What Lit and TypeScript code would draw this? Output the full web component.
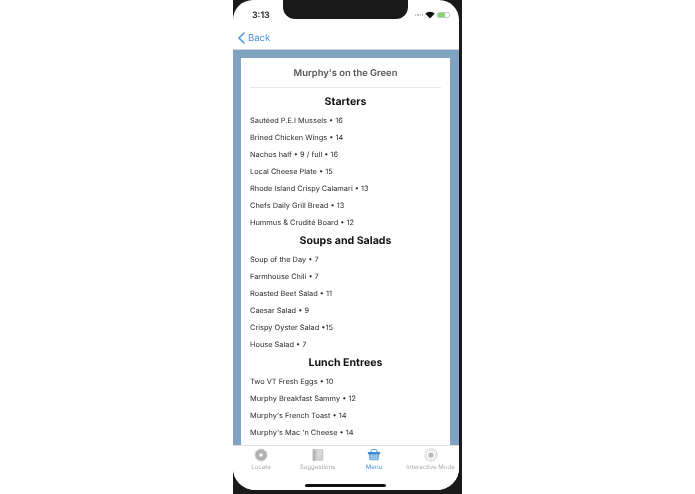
import { LitElement, html, css } from "lit";
import { customElement } from "lit/decorators.js";

const sections: { title: string; items: string[] }[] = [
  { title: "Starters", items: ["Sautéed P.E.I Mussels • 16", "Brined Chicken Wings • 14", "Nachos half • 9 / full • 16", "Local Cheese Plate • 15", "Rhode Island Crispy Calamari • 13", "Chefs Daily Grill Bread • 13", "Hummus & Crudité Board • 12"] },
  { title: "Soups and Salads", items: ["Soup of the Day • 7", "Farmhouse Chili • 7", "Roasted Beet Salad • 11", "Caesar Salad • 9", "Crispy Oyster Salad •15", "House Salad • 7"] },
  { title: "Lunch Entrees", items: ["Two VT Fresh Eggs • 10", "Murphy Breakfast Sammy • 12", "Murphy's French Toast • 14", "Murphy's Mac 'n Cheese • 14"] },
];

const locate = html`<svg viewBox="0 0 16 16" class="ic"><circle cx="8" cy="8" r="4.3" fill="none" stroke="#b0b0b0" stroke-width="4.6"/><circle cx="8" cy="8" r="6.9" fill="none" stroke="#bcbcbc" stroke-width="1.1" stroke-dasharray="1.8 1"/></svg>`;
const suggestions = html`<svg viewBox="0 0 16 16" class="ic"><rect x="2" y="1.5" width="12" height="13" fill="#c8c8c8"/><rect x="2" y="1.5" width="3" height="13" fill="#b4b4b4"/><path d="M6.5 4h6M6.5 6.5h6M6.5 9h6M6.5 11.5h6" stroke="#eeeeee" stroke-width="1"/></svg>`;
const basket = html`<svg viewBox="0 0 16 16" class="ic"><path d="M4 5 5.5 1.8h5L12 5" fill="none" stroke="#3f8bd2" stroke-width="1"/><rect x="1" y="4.6" width="14" height="2.2" rx=".6" fill="#3f8bd2"/><path d="M2 6.8h12l-1 7.2H3z" fill="#5a9cda"/><path d="M5.5 7v7M8 7v7M10.5 7v7M2.5 9.2h11M2.8 11.7h10.4" stroke="#dcebf8" stroke-width=".7"/></svg>`;
const interactive = html`<svg viewBox="0 0 16 16" class="ic"><circle cx="8" cy="8" r="3" fill="#b8b8b8"/><circle cx="8" cy="8" r="5.2" fill="none" stroke="#d8d8d8" stroke-width="1"/><circle cx="8" cy="8" r="7" fill="none" stroke="#cacaca" stroke-width="1.4" stroke-dasharray="1.8 1.2"/></svg>`;

@customElement("app-root")
export class AppRoot extends LitElement {
  static styles = css`
    :host { display: flex; justify-content: flex-start; width: 695px; height: 494px; background: #fff; overflow: hidden; font-family: Inter, "Liberation Sans", sans-serif; text-rendering: geometricPrecision; }
    .device { margin-left: 233px; width: 229px; height: 494px; background: #1a1a1a; position: relative; flex: none; filter: blur(0.35px); }
    .screen { width: 226px; height: 490px; background: #fff; border-radius: 20px 20px 22px 22px; overflow: hidden; display: flex; flex-direction: column; }
    .notch { position: absolute; left: 50px; top: 0; width: 125px; height: 19px; background: #1a1a1a; border-radius: 0 0 12px 12px; }
    .status { height: 28px; flex: none; display: flex; justify-content: space-between; align-items: center; padding: 2px 9px 0 19px; box-sizing: border-box; }
    .time { font-size: 8.8px; font-weight: 600; color: #222; }
    .sys { display: flex; align-items: center; gap: 2px; }
    .dots { display: flex; gap: 1px; }
    .dots i { width: 1.2px; height: 1.2px; border-radius: 50%; background: #bbb; display: block; }
    .wifi { width: 10px; height: 8px; display: block; }
    .batt { width: 13px; height: 6px; border: 1px solid #c8c8c8; border-radius: 2px; box-sizing: border-box; background: linear-gradient(90deg, #86d276 0 60%, #fff 60%); display: block; }
    .nav { height: 22px; flex: none; display: flex; align-items: center; gap: 3px; padding: 0 0 1px 5px; box-sizing: border-box; color: #4a90e2; font-size: 9.5px; border-bottom: 1px solid #cfd6dc; }
    .chev { width: 7px; height: 12px; display: block; }
    .content { flex: 1; min-height: 0; overflow: hidden; background: #7fa3c0; padding: 8px 9px 0 8px; }
    .card { background: #fff; padding: 1px 9px 0; height: 420px; overflow: hidden; }
    .title { height: 28px; display: flex; align-items: center; justify-content: center; font-size: 9.4px; font-weight: 600; color: #555; border-bottom: 1px solid #e6e6e6; margin-bottom: 4px; }
    h2 { margin: 0; height: 20px; line-height: 20px; text-align: center; font-size: 10.6px; font-weight: 700; color: #111; }
    .item { height: 17px; line-height: 17px; font-size: 7.4px; color: #2a2a2a; white-space: nowrap; }
    .tabs { height: 45px; flex: none; background: #fff; border-top: 1px solid #e0e0e0; box-sizing: border-box; display: flex; padding: 2px 0 0 0; position: relative; font-size: 6.1px; color: #aaa; }
    .tab { display: flex; flex-direction: column; align-items: center; gap: 2px; }
    .tab.a { width: 56px; }
    .tab.b { width: 57px; }
    .tab.c { width: 56px; color: #4a90e2; }
    .tab.d { width: 57px; white-space: nowrap; }
    .ic { width: 14px; height: 14px; display: block; }
    .home { position: absolute; left: 72px; bottom: 3px; width: 81px; height: 3px; background: #111; border-radius: 2px; }
  `;
  render() {
    return html`<div class="device">
      <div class="screen">
        <div class="status">
          <span class="time">3:13</span>
          <span class="sys">
            <span class="dots"><i></i><i></i><i></i><i></i></span>
            <svg class="wifi" viewBox="0 0 10 8"><path d="M5 7.6 0.3 2.6a6.8 6.8 0 0 1 9.4 0z" fill="#111"/></svg>
            <span class="batt"></span>
          </span>
        </div>
        <div class="nav">
          <svg class="chev" viewBox="0 0 7 12"><path d="M6 1 1 6l5 5" fill="none" stroke="#4a90e2" stroke-width="1.5" stroke-linecap="round" stroke-linejoin="round"/></svg>
          <span>Back</span>
        </div>
        <div class="content">
          <div class="card">
            <div class="title">Murphy's on the Green</div>
            ${sections.map((s) => html`<h2>${s.title}</h2>${s.items.map((i) => html`<div class="item">${i}</div>`)}`)}
          </div>
        </div>
        <div class="tabs">
          <div class="tab a">${locate}<span>Locate</span></div>
          <div class="tab b">${suggestions}<span>Suggestions</span></div>
          <div class="tab c">${basket}<span>Menu</span></div>
          <div class="tab d">${interactive}<span>Interactive Mode</span></div>
          <div class="home"></div>
        </div>
      </div>
      <div class="notch"></div>
    </div>`;
  }
}
